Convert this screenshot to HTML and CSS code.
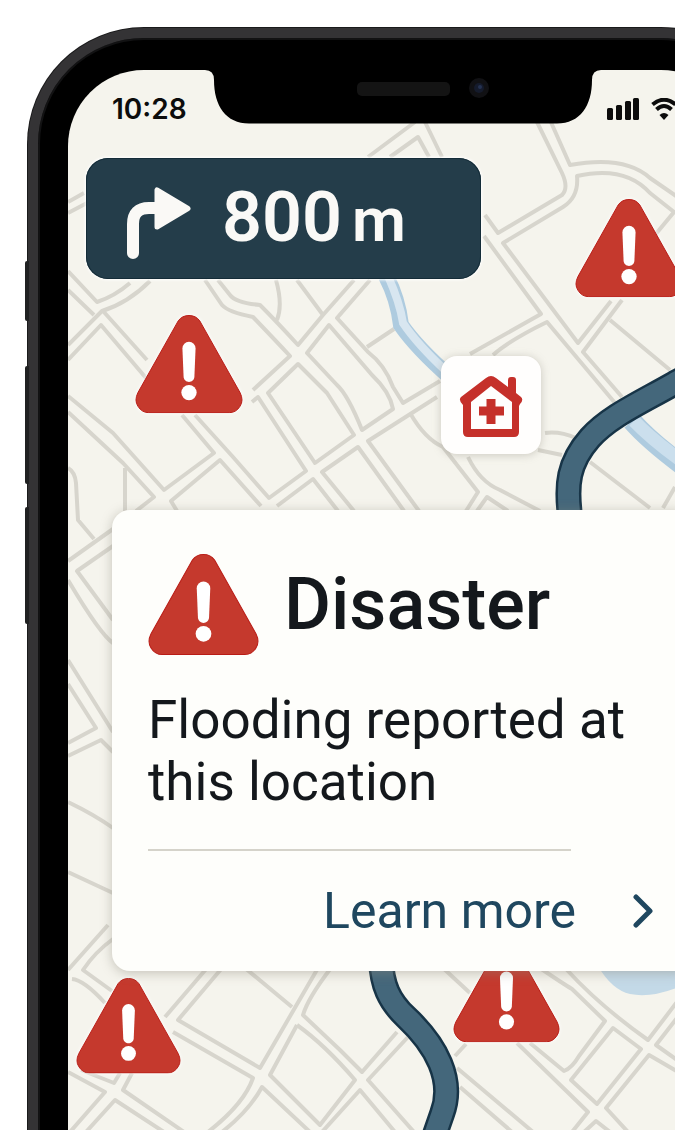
FILE: index.html
```html
<!DOCTYPE html>
<html lang="en">
<head>
<meta charset="utf-8">
<meta name="viewport" content="width=device-width, initial-scale=1">
<title>Navigation alert</title>
<link rel="stylesheet" href="styles.css">
</head>
<body>
<svg class="defs" aria-hidden="true">
  <symbol id="warning" viewBox="0 0 110 100">
    <path class="warn-body" d="M44 6Q48 .5 55 .5T66 6L107 79Q111 87 107 93Q103 99.500 96 99.500H14Q7 99.500 3 93Q-1 87 3 79Z"/>
    <path class="warn-mark" d="M48.300 34A6.700 6.700 0 0 1 61.700 34L60.500 63C60 70 50 70 49.500 63Z"/>
    <circle class="warn-mark" cx="55" cy="79" r="7.800"/>
  </symbol>
</svg>
<main class="page">
  <div class="phone">
    <i class="key key-mute"></i><i class="key key-up"></i><i class="key key-down"></i>
    <div class="screen">
      <svg class="map" viewBox="68 70 669 1240" preserveAspectRatio="xMinYMin slice" aria-hidden="true">
        <g class="streets">
          <path d="M68 202L84 193M68 213L87 203M68 271L97 302Q115 296 130 283M68 290L94 315M68 345L102 311Q128 303 150 281M68 360L101 325L146 378M103 311L147 360"/>
          <path d="M68 396L113 433L164 490L214 453L182 415M68 412L123 463L154 497L136 511M125 468V511M195 415L233 457L269 498L306 471L258 397L252 402M261 506L220 460L171 501L177 511M68 468Q75 472 76 483L78 520L94 539"/>
          <path d="M205 280L222 305Q228 312 253 317Q275 340 290 356L253 390M218 280L230 295Q236 303 260 305Q277 322 298 345L323 315L354 280M276 280Q283 305 277 320M297 280L323 315"/>
          <path d="M307 353L329 325L372 375Q390 392 393 409L362 430Q348 395 337 385ZM268 393L298 364L327 393L354 435L315 463ZM277 506L313 479L338 511M354 511L322 472L358 447L404 511M437 397L368 441L419 511M370 280L337 318L368 352Q385 365 393 387L403 403L440 381M367 347L394 329"/>
          <path d="M484 236L541 314L470 354M493 355Q510 340 547 322L615 403M485 215L498 233L562 195Q569 188 562 173L536 120M611 301L578 343L503 243L563 207Q579 197 577 176Q625 165 650 193L674 212L655 235M550 120L570 165Q625 155 650 178L737 238M622 300L583 352L622 397M610 320L670 370M545 433Q560 431 576 438M538 450L562 455M590 462L650 508M675 487L663 508"/>
          <path d="M410 413Q425 439 443 447L478 492L466 511M468 457Q480 482 500 490L540 511M477 511L487 497L508 511M368 157L415 122M390 157L418 137L429 157M425 122L442 157"/>
          <path d="M68 561L113 529M113 620L77 571L113 546M68 580Q100 634 113 643M68 660L113 732M68 684L96 728L68 743M68 756L101 740L113 752M68 802Q95 815 113 828M68 872L113 893M68 970L108 925M113 939Q95 952 83 970L112 991M72 979Q84 980 105 1003"/>
          <path d="M165 1017L207 968M222 968L178 1020L260 1068L318 968M173 1032L253 1078Q244 1104 208 1132M222 1132Q249 1111 262 1087L310 1132M245 968L292 1007M331 968Q308 998 303 1015L340 1050L362 1072L397 1032M297 1025L270 1075L320 1125L355 1080Q325 1045 297 1025M322 1132L360 1090L395 1132M408 1037L368 1080L414 1132M68 1072L105 1092L70 1132M86 1132L115 1100L164 1132M132 1073L123 1090L184 1132M81 1070L114 1083L120 1073"/>
          <path d="M443 968L470 993M540 968Q562 983 572 989L605 1021L579 1056Q572 1068 564 1071L530 1043M517 1043L588 1112L572 1132M567 970Q600 1006 648 1040L680 998M571 1080L613 1028L641 1049L597 1104ZM680 1062L656 1045L680 1014M680 1073L649 1055L606 1108L628 1132M584 1132L596 1121L610 1132M457 1068L533 1132M460 1087L512 1132M455 1056L466 1044"/>
        </g>
        <path class="river-edge" d="M386 276Q398 299 401 325Q417 348 450 377"/>
        <path class="river" d="M388 276Q400 303 403 323Q417 344 446 371"/>
        <path class="river-edge wide" d="M632 421Q653 445 700 478"/>
        <path class="river wide" d="M634 421Q656 444 700 474"/>
        <path class="lake" d="M598 966Q612 990 630 994Q655 999 690 982V960H598Z"/>
        <path class="route-edge" d="M737 350L675 383C640 403 610 416 590 438C568 463 566 485 570 516M381 960C382 985 389 1001 406 1017C436 1045 455 1080 442 1114L433 1140"/>
        <path class="route" d="M737 350L675 383C640 403 610 416 590 438C568 463 566 485 570 516M381 960C382 985 389 1001 406 1017C436 1045 455 1080 442 1114L433 1140"/>
      </svg>

      <button class="pin pin-west" aria-label="Hazard"><svg viewBox="0 0 110 100"><use href="#warning"/></svg></button>
      <button class="pin pin-east" aria-label="Hazard"><svg viewBox="0 0 110 100"><use href="#warning"/></svg></button>
      <button class="pin pin-southwest" aria-label="Hazard"><svg viewBox="0 0 110 100"><use href="#warning"/></svg></button>
      <button class="pin pin-south" aria-label="Hazard"><svg viewBox="0 0 110 100"><use href="#warning"/></svg></button>
      <button class="shelter" aria-label="Shelter">
        <svg viewBox="0 0 64 64">
          <path class="house-fill" d="M2 22L27 3Q32 -1 37 3L49 12V5Q49 2 52 2H54Q57 2 57 5V18L62 22Q65 25 61 29L60 31V57Q60 62 55 62H9Q4 62 4 57V30Q-1 25 2 22Z"/>
          <path class="house-room" d="M12 27L32 11L53 27V54H12Z"/>
          <path class="house-cross" d="M32 24V49M20 36H45"/>
        </svg>
      </button>

      <header class="status">
        <time class="clock">10:28</time>
        <svg class="notch" viewBox="0 0 396 54" aria-hidden="true">
          <path d="M0 0Q9 0 9 10C9 36 21 53.500 44 53.500H352C375 53.500 387 36 387 10Q387 0 396 0V-2H0Z"/>
          <rect class="speaker" x="152" y="12" width="93" height="14" rx="5"/>
          <circle class="camera" cx="274" cy="18" r="10"/>
          <circle class="lens" cx="274" cy="18" r="5"/>
          <circle class="glint" cx="275" cy="17" r="2"/>
        </svg>
        <div class="signals">
          <svg class="bars" viewBox="0 0 32 22" aria-label="Signal">
            <rect x="0" y="10" width="6" height="12" rx="1.500"/><rect x="9" y="7" width="6" height="15" rx="1.500"/><rect x="18" y="3" width="6" height="19" rx="1.500"/><rect x="26" y="0" width="6" height="22" rx="1.500"/>
          </svg>
          <svg class="wifi" viewBox="0 0 26 22" aria-label="Wi-Fi">
            <path class="arc" d="M1.500 6.500Q13-3 24.500 6.500M5.500 11.500Q13 4.500 20.500 11.500"/>
            <path d="M8.500 17Q13 13 17.500 17L13 22Z"/>
          </svg>
        </div>
      </header>

      <section class="turn" aria-label="Next turn">
        <svg class="turn-arrow" viewBox="0 0 64 74" aria-hidden="true">
          <path class="stem" d="M6 67V38Q6 22 22 22H32"/>
          <path class="head" d="M30 4V41L61 22.500Z"/>
        </svg>
        <p class="distance"><span>800</span> <span class="unit">m</span></p>
      </section>

      <article class="card">
        <div class="card-head">
          <svg class="card-icon" viewBox="0 0 110 100" aria-hidden="true"><use href="#warning"/></svg>
          <h1>Disaster</h1>
        </div>
        <p class="message">Flooding reported at this location</p>
        <hr>
        <a class="more" href="#details">
          <span>Learn more</span>
          <svg class="chevron" viewBox="0 0 20 34" aria-hidden="true"><path d="M3 3L17 17L3 31"/></svg>
        </a>
      </article>
    </div>
  </div>
</main>
</body>
</html>
```
FILE: styles.css
```css
* { box-sizing: border-box; }

body {
  margin: 0;
  background: #fff;
  color: #14181c;
  font-family: Roboto, "Liberation Sans", sans-serif;
}

h1, p { margin: 0; }

button {
  padding: 0;
  border: 0;
  background: none;
}

svg { display: block; }

.defs { position: absolute; width: 0; height: 0; }
.warn-body { fill: #c5392d; stroke: #b91c16; stroke-width: 1; }
.warn-mark { fill: #fff; }

.page {
  height: 100vh;
  overflow: hidden;
  padding: 28px 0 0 28px;
}

.phone {
  position: relative;
  margin-right: -102px;
  padding: 32px 30px;
  border: 10px solid #343335;
  border-radius: 116px;
  background: #000;
  box-shadow: inset 0 0 0 2px #121213, 0 0 0 1px #1a1a1b;
}

.key {
  position: absolute;
  left: -13px;
  width: 4px;
  border-radius: 2px 0 0 2px;
  background: #202122;
}
.key-mute { top: 223px; height: 60px; }
.key-up { top: 328px; height: 118px; }
.key-down { top: 469px; height: 117px; }

.screen {
  position: relative;
  min-height: 1240px;
  overflow: hidden;
  border-radius: 76px;
  background: #f5f4ed;
}

.map {
  position: absolute;
  inset: 0;
  width: 100%;
  height: 100%;
}
.map path { fill: none; }
.streets { stroke: #d7d5cd; stroke-width: 4; stroke-linejoin: round; }
.river-edge { stroke: #aecbdf; stroke-width: 16; }
.river { stroke: #d8e6f0; stroke-width: 8; }
.river-edge.wide { stroke-width: 20; }
.river.wide { stroke: #cbdfed; stroke-width: 13; }
.map .lake { fill: #c3d9e7; }
.route-edge { stroke: #173447; stroke-width: 26; }
.route { stroke: #44677b; stroke-width: 21; }

.pin {
  position: absolute;
  width: 108px;
}
.pin svg, .card-icon { overflow: visible; }
.pin svg { filter: drop-shadow(0 0 2px #fff); }
.pin-west { left: 67px; top: 245px; }
.pin-east { left: 507px; top: 129px; }
.pin-southwest { left: 8px; top: 908px; width: 105px; }
.pin-south { left: 385px; top: 875px; width: 107px; }

.shelter {
  position: absolute;
  left: 373px;
  top: 286px;
  display: grid;
  place-items: center;
  width: 100px;
  height: 98px;
  border-radius: 16px;
  background: #fffefd;
  box-shadow: 0 1px 8px #8b887a66;
}
.shelter svg { width: 64px; margin-top: 4px; overflow: visible; }
.house-fill { fill: #c5302a; }
.house-room { fill: #fffefd; }
.house-cross { fill: none; stroke: #c5302a; stroke-width: 9; }

.status {
  position: relative;
  display: grid;
  grid-template-columns: 1fr 396px 1fr;
}
.clock {
  padding: 23px 0 0 44px;
  color: #0c0c0c;
  font: 600 28px/32px Inter, sans-serif;
}
.notch { width: 396px; overflow: visible; }
.speaker { fill: #141414; }
.camera { fill: #111114; }
.lens { fill: #151b2c; }
.glint { fill: #253252; }
.signals {
  display: flex;
  gap: 12px;
  padding: 28px 0 0 6px;
  fill: #0c0c0c;
}
.bars { width: 32px; height: 22px; }
.wifi { width: 26px; height: 22px; }
.arc { fill: none; stroke: #0c0c0c; stroke-width: 4; }

.turn {
  position: relative;
  display: flex;
  align-items: center;
  gap: 31px;
  width: 395px;
  height: 121px;
  margin: 33px 18px 0;
  padding-left: 41px;
  border-radius: 22px;
  background: #243d4a;
  box-shadow: inset 0 0 0 1px #142c38, 0 0 3px 1px #fff;
  color: #faf9f6;
}
.turn-arrow { width: 64px; height: 74px; margin-top: 8px; }
.stem { fill: none; stroke: #faf9f6; stroke-width: 12; stroke-linecap: round; }
.head { fill: #faf9f6; stroke: #faf9f6; stroke-width: 5; stroke-linejoin: round; }
.distance {
  display: flex;
  align-items: baseline;
  gap: 10px;
  font-size: 70px;
  font-weight: 600;
  line-height: 80px;
}
.unit { font-size: 62px; }

.card {
  position: relative;
  margin: 231px 45px 0 44px;
  padding: 44px 36px 0;
  border-radius: 18px;
  background: #fefefb;
  box-shadow: 0 2px 12px #8b887a77;
}
.card-head {
  display: flex;
  align-items: center;
  gap: 25px;
}
.card-icon { width: 111px; height: 101px; }
h1 {
  font-size: 72px;
  font-weight: 500;
  line-height: 84px;
}
.message {
  margin-top: 34px;
  font-size: 53px;
  line-height: 62px;
}
hr {
  height: 2px;
  margin: 36px 85px 0 0;
  border: 0;
  background: #d5d3ca;
}
.more {
  display: flex;
  align-items: center;
  justify-content: flex-end;
  gap: 57px;
  height: 120px;
  color: #1f475f;
  font-size: 50px;
  text-decoration: none;
}
.chevron { width: 20px; height: 34px; margin-right: 3px; }
.chevron path {
  fill: none;
  stroke: #1f475f;
  stroke-width: 5;
  stroke-linecap: round;
  stroke-linejoin: round;
}
```
